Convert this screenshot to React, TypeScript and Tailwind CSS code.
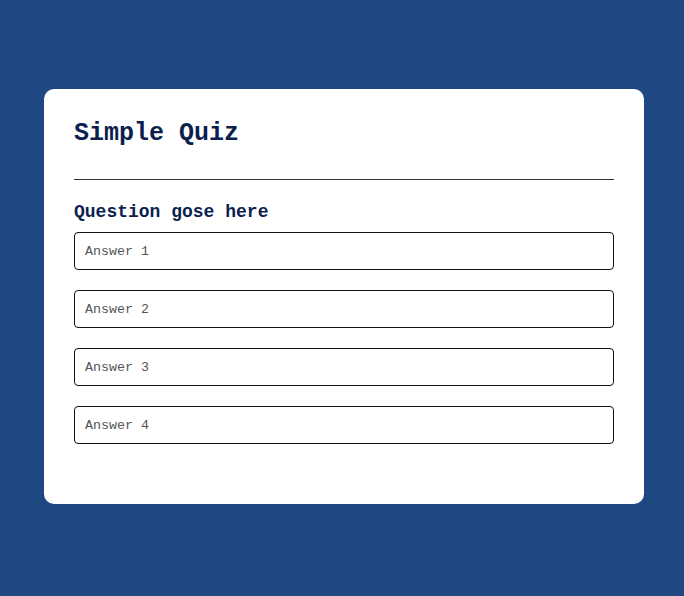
const answers = ['Answer 1', 'Answer 2', 'Answer 3', 'Answer 4']

export default function App() {
  return (
    <div className="flex min-h-screen items-center justify-center bg-[#1f4882] font-['Courier_New','Liberation_Mono',monospace]">
      <div className="-mt-[3px] ml-[4px] w-[600px] rounded-[10px] bg-white px-[30px] pt-[30px] pb-[60px]">
        <h1 className="text-[25px] leading-[30px] font-bold text-[#0c1f4f]">Simple Quiz</h1>
        <hr className="mt-[30px] border-t border-[#333]" />
        <h2 className="mt-[20px] mb-[8px] text-[18px] leading-[24px] font-bold text-[#0c1f4f]">
          Question gose here
        </h2>
        <div className="flex flex-col gap-[20px]">
          {answers.map((answer) => (
            <button
              key={answer}
              type="button"
              className="h-[38px] w-full rounded-[4px] border border-[#111] bg-white pt-[2px] pl-[10px] text-left text-[13.33px] text-[#555]"
            >
              {answer}
            </button>
          ))}
        </div>
      </div>
    </div>
  )
}
